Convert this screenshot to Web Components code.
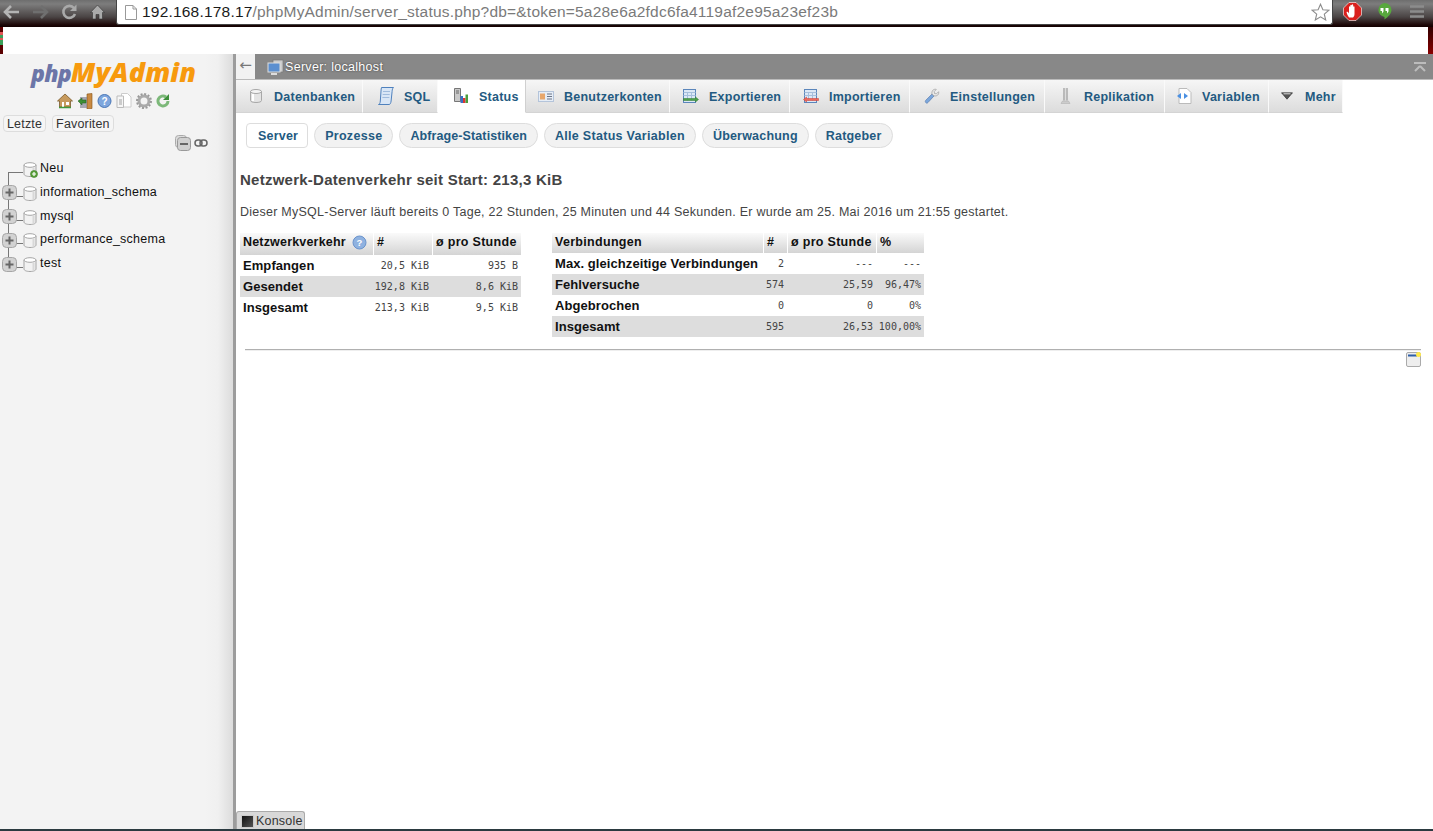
<!DOCTYPE html>
<html lang="de">
<head>
<meta charset="utf-8">
<title>phpMyAdmin</title>
<style>
  html, body { margin: 0; height: 100%; overflow: hidden; background: #fff; }
  body { font-family: "Liberation Sans", Arial, sans-serif; display: flex; flex-direction: column; height: 831px; }
  pma-page { flex: 1; min-height: 0; }
</style>
</head>
<body>
<browser-bar url-host="192.168.178.17" url-path="/phpMyAdmin/server_status.php?db=&amp;token=5a28e6a2fdc6fa4119af2e95a23ef23b"></browser-bar>
<page-strip></page-strip>
<pma-page>
  <pma-nav slot="nav">
    <pma-tree-row kind="new" label="Neu"></pma-tree-row>
    <pma-tree-row label="information_schema"></pma-tree-row>
    <pma-tree-row label="mysql"></pma-tree-row>
    <pma-tree-row label="performance_schema"></pma-tree-row>
    <pma-tree-row kind="last" label="test"></pma-tree-row>
  </pma-nav>
  <pma-main slot="main">
    <pma-tabs slot="tabs">
      <pma-tab icon="db" label="Datenbanken" width="127" pad="12"></pma-tab>
      <pma-tab icon="sql" label="SQL" width="75" pad="15"></pma-tab>
      <pma-tab icon="status" label="Status" width="88" pad="15" active></pma-tab>
      <pma-tab icon="users" label="Benutzerkonten" width="144" pad="12"></pma-tab>
      <pma-tab icon="export" label="Exportieren" width="120" pad="13"></pma-tab>
      <pma-tab icon="import" label="Importieren" width="120" pad="13"></pma-tab>
      <pma-tab icon="tools" label="Einstellungen" width="135" pad="14"></pma-tab>
      <pma-tab icon="repl" label="Replikation" width="120" pad="13"></pma-tab>
      <pma-tab icon="vars" label="Variablen" width="104" pad="11"></pma-tab>
      <pma-tab icon="more" label="Mehr" width="74" pad="10"></pma-tab>
    </pma-tabs>
    <pma-pills slot="pills">
      <pma-pill active>Server</pma-pill>
      <pma-pill style="letter-spacing:.3px">Prozesse</pma-pill>
      <pma-pill style="letter-spacing:.1px">Abfrage-Statistiken</pma-pill>
      <pma-pill style="letter-spacing:.3px">Alle Status Variablen</pma-pill>
      <pma-pill>Überwachung</pma-pill>
      <pma-pill>Ratgeber</pma-pill>
    </pma-pills>
    <pma-status></pma-status>
  </pma-main>
</pma-page>

<script>
const ICONS = {
  db: `<svg width="16" height="16" viewBox="0 0 16 16"><path d="M2.500 3.500v9c0 1.300 2.400 2 5.500 2s5.500-.7 5.500-2v-9z" fill="#e4e4e4" stroke="#a8a8a8"/><ellipse cx="8" cy="3.500" rx="5.500" ry="2" fill="#f4f4f4" stroke="#a8a8a8"/><path d="M5 6v7" stroke="#fff" stroke-width="2"/></svg>`,
  sql: `<svg width="16" height="18" viewBox="0 0 16 18"><path d="M3.500 .5h12c-1 1-1.200 2-1.400 4l-1 9.500c-.2 1.800-.8 3.500-2 3.500H.5c1-.5 1.700-1.200 1.800-3.500l.7-10c.1-1.500.2-2.500.5-3.500z" fill="#d8e6f6" stroke="#4f81bd"/><path d="M5 4.500h7M4.700 7.500h7M4.400 10.500h7" stroke="#9fbbdd"/></svg>`,
  status: `<svg width="16" height="16" viewBox="0 0 16 16"><path d="M1.500 .5h6v13h-6z" fill="#c9c9c9" stroke="#777"/><path d="M3 3h3M3 5h3" stroke="#666"/><path d="M7.500 8h2.500v7H7.500z" fill="#3a6fc4"/><path d="M10 10h2.500v5H10z" fill="#d33"/><path d="M12.500 6.500H15V15h-2.500z" fill="#4a9e3c"/></svg>`,
  users: `<svg width="16" height="11" viewBox="0 0 16 11"><rect x=".5" y=".5" width="15" height="10" fill="#e6edf6" stroke="#b4c4da"/><rect x="2" y="2.500" width="5" height="6" fill="#e8a76c"/><path d="M9 3h5M9 5.500h5M9 8h5" stroke="#6a7488"/></svg>`,
  export: `<svg width="16" height="16" viewBox="0 0 16 16"><rect x=".5" y="1.500" width="12" height="13" fill="#dce8f6" stroke="#5b86bb"/><path d="M.5 4.500h12M.5 7.500h12M4.500 4.500v8M8.500 4.500v8" stroke="#a6bfdc"/><path d="M.5 10.500h12V9l3 2.500-3 2.500v-1.500H.5z" fill="#4ea14b" stroke="#2f7a2e" stroke-width=".5"/></svg>`,
  import: `<svg width="16" height="16" viewBox="0 0 16 16"><rect x="1.500" y="1.500" width="12" height="13" fill="#dce8f6" stroke="#5b86bb"/><path d="M1.500 4.500h12M1.500 7.500h12M5.500 4.500v8M9.500 4.500v8" stroke="#a6bfdc"/><path d="M15.500 10.500h-12V9l-3 2.500 3 2.500v-1.500h12z" fill="#ef6a5e" stroke="#c9372c" stroke-width=".5"/></svg>`,
  tools: `<svg width="18" height="18" viewBox="0 0 18 18"><path d="M2.300 16.700c-1.200-1-1-2.200-.2-3l7-7 2.200 2.200-6.800 7.400c-.8.800-1.400 1.100-2.200.4z" fill="#7ba7dc" stroke="#5d7fb0" stroke-width=".8"/><path d="M9 6.800c-.4-1.800.1-3.300 1-4.300 1-1 2.500-1.300 3.800-.9L11.500 4l.3 2.200 2.200.4 2.400-2.400c.4 1.300 0 2.800-.9 3.700-1 .9-2.400 1.300-4.200.9z" fill="#ececec" stroke="#999" stroke-width=".8"/></svg>`,
  repl: `<svg width="16" height="18" viewBox="0 0 16 18"><path d="M6 1v12.500M9 1v12.500" stroke="#999" stroke-width="1.200"/><path d="M7.500 1v12.500" stroke="#ddd"/><path d="M4.500 14h6l1.500 2.500H3z" fill="#ccc" stroke="#aaa" stroke-width=".5"/></svg>`,
  vars: `<svg width="16" height="16" viewBox="0 0 16 16"><path d="M3 .5h8L15 4.500v11H3z" fill="#fff" stroke="#bbb"/><path d="M5 5 1 8l4 3z" fill="#4a90e2"/><path d="M8 5l4 3-4 3z" fill="#4a90e2"/></svg>`,
  more: `<svg width="12" height="8" viewBox="0 0 12 8"><path d="M.500 .8h11L6 7.200z" fill="#555" stroke="#222" stroke-width=".6"/><path d="M2.500 1.800h7" stroke="#ddd"/></svg>`,
};

const DB_ICON = `<svg width="14" height="15" viewBox="0 0 14 15"><path d="M1 3v9c0 1.400 2.400 2.500 6 2.500s6-1.100 6-2.500V3z" fill="#f2f2f2" stroke="#a5a5a5"/><ellipse cx="7" cy="3" rx="6" ry="2.300" fill="#fff" stroke="#a5a5a5"/><path d="M10.500 5.500v8" stroke="#d8d8d8" stroke-width="2"/></svg>`;

class BrowserBar extends HTMLElement {
  connectedCallback() {
    this.attachShadow({ mode: 'open' }).innerHTML = `
      <style>
        :host { display: flex; height: 27px; align-items: stretch; background: linear-gradient(#6e6e6e 0, #7d7d7d 4px, #4a4444 17px, #1c0606 25px, #120000 27px); }
        .nav { width: 116px; display: flex; box-sizing: border-box; padding: 3px 0 0 3px; gap: 12px; }
        .omni { flex: 0 0 1217px; height: 25px; box-sizing: border-box; background: #fff; border: 1px solid #444; border-top: 0; border-radius: 0 0 3px 3px; display: flex; align-items: center; padding-left: 8px; }
        .url { font: 15.500px "Liberation Sans", Arial, sans-serif; color: #7a7a7a; margin-left: 5px; white-space: nowrap; flex: 1; padding-top: 0; letter-spacing: .2px; }
        .url b { font-weight: 400; color: #1a1a1a; }
        .ext { flex: 1; display: flex; gap: 15px; padding: 2px 0 0 10px; }
      </style>
      <div class="nav">
        <svg width="17" height="18" viewBox="0 0 17 18"><path d="M8 3 2 9l6 6M2 9h14" fill="none" stroke="#b4b4b4" stroke-width="2.600"/></svg>
        <svg width="17" height="18" viewBox="0 0 17 18"><path d="M9 3l6 6-6 6M15 9H1" fill="none" stroke="#6f6f6f" stroke-width="2.600"/></svg>
        <svg width="17" height="18" viewBox="0 0 17 18"><path d="M14 11a6 6 0 1 1-1-6" fill="none" stroke="#a9a9a9" stroke-width="2.600"/><path d="M15.500 1.500v6.500H9z" fill="#a9a9a9"/></svg>
        <svg width="15" height="18" viewBox="0 0 15 18"><path d="M7.500 2 .5 9.500h2V16h3.500v-4.500h3V16H12.500V9.500h2z" fill="#aaa" stroke="#333" stroke-width=".6"/></svg>
      </div>
      <div class="omni">
        <svg width="12" height="15" viewBox="0 0 12 15"><path d="M.5.5h7.500l3.500 3.500v10.500H.5z" fill="#fff" stroke="#999"/><path d="M8 .5V4h3.500" fill="none" stroke="#999"/></svg>
        <span class="url"><b>${this.getAttribute('url-host')}</b>${this.getAttribute('url-path').replace(/&/g, '&amp;')}</span>
        <svg style="margin-right:2px" width="19" height="18" viewBox="0 0 19 18"><path d="M9.500 1.200l2.400 5.500 6 .5-4.600 4 1.400 5.800-5.200-3.100-5.200 3.100 1.400-5.800-4.600-4 6-.5z" fill="#fff" stroke="#8c8c8c" stroke-width="1.100"/></svg>
      </div>
      <div class="ext">
        <svg width="19" height="19" viewBox="0 0 19 19"><path d="M6 .5h7L18.500 6v7L13 18.500H6L.5 13V6z" fill="#d9201c" stroke="#fff" stroke-width=".6"/><path d="M6 15.500c-1.500-2-2-3.500-2.500-5.500 1-.5 1.800.2 2.500 1.500V5c.1-1 1.300-1 1.300 0V3.500c.1-1 1.400-1 1.500 0V3c.1-1 1.400-1 1.400 0v2c.1-1 1.300-1 1.300 0v7c0 1.500-.5 2.500-1.500 3.500z" fill="#fff"/></svg>
        <svg width="15" height="20" viewBox="0 0 15 20"><path d="M7.500 1a7 7 0 0 1 7 7c0 3.500-3.500 7-7 9.500v-2.600A7 7 0 0 1 7.500 1z" fill="#58a83d"/><path d="M3.500 6h3v3.500l-1.500 2V9H3.500zM8.500 6h3v3.500l-1.500 2V9H8.500z" fill="#fff"/></svg>
        <svg style="margin:2px 0 0 3px" width="14" height="16" viewBox="0 0 14 16"><path d="M0 2.500h14M0 7.500h14M0 12.500h14" stroke="#8c8c8c" stroke-width="2.500"/></svg>
      </div>`;
  }
}

class PageStrip extends HTMLElement {
  connectedCallback() {
    this.attachShadow({ mode: 'open' }).innerHTML = `
      <style>
        :host { display: flex; height: 27px; background: #5a0000; }
        .edge { width: 3px; background: linear-gradient(#5a0000 5px, #e25555 5px, #e25555 8px, #3aa05a 8px, #3aa05a 11px, #e25555 11px, #e25555 13px, #3aa05a 13px, #3aa05a 18px, #5a0000 18px); }
        .white { width: 1425px; background: #fff; }
        .right { flex: 1; background: linear-gradient(#300000, #8a0000); }
      </style>
      <div class="edge"></div><div class="white"></div><div class="right"></div>`;
  }
}

class PmaPage extends HTMLElement {
  connectedCallback() {
    this.attachShadow({ mode: 'open' }).innerHTML = `
      <style>
        :host { display: flex; position: relative; background: #fff; box-sizing: border-box; border-bottom: 2px solid #2b3a40; }
      </style>
      <slot name="nav"></slot><slot name="main"></slot><pma-console></pma-console>`;
  }
}

class PmaNav extends HTMLElement {
  connectedCallback() {
    this.attachShadow({ mode: 'open' }).innerHTML = `
      <style>
        :host { display: block; flex: 0 0 233px; box-sizing: border-box; background: linear-gradient(to right, #f3f3f3 205px, #f0f0f0 218px, #dcdcdc 233px); color: #111; font-size: 12.500px; }
        .logo { margin: 4px 0 0 31px; font-family: "Open Sans", "Liberation Sans", sans-serif; font-style: italic; font-weight: 800; line-height: 27px; height: 27px; white-space: nowrap; }
        .logo i { color: #6c76a8; font-size: 23px; letter-spacing: -.8px; }
        .logo b { color: #f79a0e; font-size: 27px; font-weight: 800; letter-spacing: .15px; }
        .links { display: flex; margin: 7px 0 0 57px; gap: 4px; height: 17px; align-items: center; }
        .recent { display: flex; gap: 6px; margin: 6px 0 0 3px; }
        button { font: 12.500px "Liberation Sans", Arial, sans-serif; color: #333; height: 17px; padding: 0 3px; background: #f5f5f5; border: 1px solid #ddd; border-radius: 4px; letter-spacing: .17px; }
        .tools { display: flex; gap: 3px; margin: 2px 0 0 175px; align-items: center; height: 17px; }
        .tree { margin-top: 9px; display: flex; flex-direction: column; }
      </style>
      <div class="logo"><i>php</i><b>MyAdmin</b></div>
      <div class="links">
        <svg width="16" height="16" viewBox="0 0 16 16"><path d="M8 1 .5 8h2v6h11V8h2z" fill="#c79a5c" stroke="#7a5a2c" stroke-width=".8"/><path d="M5 14V9h2v5zM9 9h3v3H9z" fill="#fff"/><path d="M2 14.500h12" stroke="#3f9a3c" stroke-width="1.500"/></svg>
        <svg width="16" height="16" viewBox="0 0 16 16"><path d="M10 1l5-.5v15l-5 .5z" fill="#c98a42" stroke="#855015" stroke-width=".6"/><path d="M3 4h7v11H3z" fill="#778" opacity=".6"/><path d="M1 8l4-3v2h4v3H5v2z" fill="#3d8f35" stroke="#235d1e" stroke-width=".5"/></svg>
        <svg width="15" height="16" viewBox="0 0 15 16"><circle cx="7.500" cy="8" r="6.500" fill="#7ea6dd" stroke="#4a76b6"/><text x="7.500" y="11.500" text-anchor="middle" font-size="10" font-weight="700" font-family="Liberation Sans" fill="#fff">?</text></svg>
        <svg width="16" height="16" viewBox="0 0 16 16"><path d="M5.500 .5h6L15 4v10H5.500z" fill="#fff" stroke="#ccc"/><path d="M1 3h6.500v11.500H1z" fill="#f6f6f6" stroke="#bbb"/><path d="M3 6h3v6H3z" fill="#ccc"/></svg>
        <svg width="16" height="16" viewBox="0 0 16 16"><circle cx="8" cy="8" r="5" fill="none" stroke="#aaa" stroke-width="3"/><circle cx="8" cy="8" r="7" fill="none" stroke="#999" stroke-width="2" stroke-dasharray="2 1.660"/></svg>
        <svg width="14" height="16" viewBox="0 0 14 16"><path d="M12 8a5 5 0 1 1-2-4" fill="none" stroke="#7cb879" stroke-width="3"/><path d="M13 1v6H7z" fill="#3d8f3a"/></svg>
      </div>
      <div class="recent"><button>Letzte</button><button>Favoriten</button></div>
      <div class="tools">
        <svg width="16" height="16" viewBox="0 0 16 16"><rect x=".5" y=".5" width="11" height="12" rx="3" fill="#ddd" stroke="#aaa"/><rect x="2.500" y="2.500" width="13" height="13" rx="3" fill="#d0d0d0" stroke="#999"/><path d="M5 9h8" stroke="#666" stroke-width="2"/></svg>
        <svg width="14" height="8" viewBox="0 0 14 8"><rect x="1" y="1" width="7" height="6" rx="3" fill="none" stroke="#666" stroke-width="1.500"/><rect x="6" y="1" width="7" height="6" rx="3" fill="none" stroke="#666" stroke-width="1.500"/></svg>
      </div>
      <div class="tree"><slot></slot></div>`;
  }
}

class PmaTreeRow extends HTMLElement {
  connectedCallback() {
    const kind = this.getAttribute('kind');
    const isNew = kind === 'new';
    const last = kind === 'last';
    const glyph = isNew
      ? `<span class="stub"></span>`
      : `<svg class="exp" width="15" height="15" viewBox="0 0 15 15"><rect x=".5" y=".5" width="14" height="14" rx="4" fill="#d2d2d2" stroke="#a6a6a6"/><path d="M3.500 7.500h8M7.500 3.500v8" stroke="#666" stroke-width="2"/></svg><span class="stub short"></span>`;
    this.attachShadow({ mode: 'open' }).innerHTML = `
      <style>
        :host { display: flex; position: relative; height: 23.750px; align-items: flex-start; }
        .gutter { width: 23px; height: 16px; margin-top: 1px; display: flex; align-items: center; position: relative; padding-left: 2px; box-sizing: border-box; }
        .stub { position: absolute; left: 8px; right: 0; top: 11px; height: 1px; background: #777; }
        .stub.short { left: 16px; }
        .exp { position: relative; z-index: 1; }
        .line { position: absolute; left: 8px; width: 1px; background: #777; top: ${isNew ? '12px' : '0'}; height: ${last ? '8px' : isNew ? '12px' : '24px'}; }
        .icon { position: relative; width: 16px; height: 16px; margin-top: 2px; }
        .plus { position: absolute; left: 7px; top: 8px; }
        .label { margin-left: 1px; line-height: 16px; font-size: 12.500px; color: #111; letter-spacing: .25px; white-space: nowrap; }
      </style>
      <span class="line"></span>
      <div class="gutter">${glyph}</div>
      <div class="icon">${DB_ICON}${isNew ? `<svg class="plus" width="8" height="8" viewBox="0 0 8 8"><circle cx="4" cy="4" r="3.500" fill="#5aa03c" stroke="#3d7d24" stroke-width=".6"/><path d="M2 4h4M4 2v4" stroke="#fff" stroke-width="1.200"/></svg>` : ''}</div>
      <div class="label">${this.getAttribute('label')}</div>`;
  }
}

class PmaMain extends HTMLElement {
  connectedCallback() {
    this.attachShadow({ mode: 'open' }).innerHTML = `
      <style>
        :host { display: block; flex: 1; min-width: 0; box-sizing: border-box; border-left: 3px solid #9c9c9c; }
        .server { display: flex; align-items: center; height: 26px; background: #888; border-bottom: 1px solid #bbb; box-sizing: border-box; }
        .back { width: 19px; height: 25px; background: #f2f2f2; color: #777; font: 15px "DejaVu Sans", sans-serif; text-align: center; line-height: 23px; }
        .srv { margin-left: 12px; display: flex; gap: 1px; align-items: center; color: #fff; font-size: 12.500px; flex: 1; text-shadow: 0 0 2px #333; letter-spacing: .3px; }
        .up { margin-right: 7px; }
      </style>
      <div class="server">
        <div class="back">←</div>
        <div class="srv">
          <svg width="17" height="16" viewBox="0 0 17 16"><rect x="6" y="1" width="10" height="12" fill="#ccc" stroke="#777" stroke-width=".7"/><rect x="1" y="4" width="12" height="9" fill="#5b8fd0" stroke="#ddd"/><path d="M4 15h6" stroke="#ddd" stroke-width="2"/></svg>
          <span>Server: localhost</span>
        </div>
        <svg class="up" width="12" height="10" viewBox="0 0 12 10"><path d="M0 1h12" stroke="#bcbcbc" stroke-width="2"/><path d="M6 4 1 9M6 4l5 5" stroke="#bcbcbc" stroke-width="2" fill="none"/></svg>
      </div>
      <slot name="tabs"></slot>
      <slot name="pills"></slot>
      <slot></slot>`;
  }
}

class PmaTabs extends HTMLElement {
  connectedCallback() {
    this.attachShadow({ mode: 'open' }).innerHTML = `
      <style>
        :host { display: flex; height: 33px; padding-left: 0; margin-bottom: 10px; }
      </style>
      <slot></slot>`;
  }
}

class PmaTab extends HTMLElement {
  connectedCallback() {
    const active = this.hasAttribute('active');
    this.attachShadow({ mode: 'open' }).innerHTML = `
      <style>
        :host { display: flex; flex: 0 0 ${this.getAttribute('width')}px; box-sizing: border-box; align-items: center; padding-left: ${this.getAttribute('pad')}px; background: ${active ? '#fff' : 'linear-gradient(#f6f6f6, #dcdcdc)'}; border-right: 1px solid ${active ? '#d0d0d0' : '#fafafa'}; border-bottom: 1px solid ${active ? '#fff' : '#d4d4d4'}; }
        .ic { width: 16px; height: 18px; display: flex; align-items: center; justify-content: center; flex: none; margin-right: 10px; }
        .t { font: 700 12.500px "Liberation Sans", Arial, sans-serif; color: #235a81; letter-spacing: .25px; white-space: nowrap; padding-top: 1px; }
      </style>
      <span class="ic">${ICONS[this.getAttribute('icon')]}</span>
      <span class="t">${this.getAttribute('label')}</span>`;
  }
}

class PmaPills extends HTMLElement {
  connectedCallback() {
    this.attachShadow({ mode: 'open' }).innerHTML = `
      <style>
        :host { display: flex; gap: 6px; padding-left: 10px; height: 25px; }
      </style>
      <slot></slot>`;
  }
}

class PmaPill extends HTMLElement {
  connectedCallback() {
    const active = this.hasAttribute('active');
    this.attachShadow({ mode: 'open' }).innerHTML = `
      <style>
        :host { display: flex; align-items: center; box-sizing: border-box; height: 25px; padding: 0 ${active ? 9 : 10}px 0 ${active ? 11 : 10}px; border: 1px solid #ddd; border-radius: ${active ? 4 : 13}px; background: ${active ? '#fff' : '#f2f2f2'}; font: 700 12.500px "Liberation Sans", Arial, sans-serif; color: #235a81; letter-spacing: .2px; white-space: nowrap; }
      </style>
      <slot></slot>`;
  }
}

class PmaTable extends HTMLElement {
  connectedCallback() {
    const cols = this.getAttribute('cols').split(',').map(n => `${n}px`).join(' ');
    const rowH = this.getAttribute('row-h');
    const headH = Number(this.getAttribute('head-h'));
    const data = JSON.parse(this.getAttribute('data'));
    const head = JSON.parse(this.getAttribute('head'));
    const q = `<svg width="15" height="15" viewBox="0 0 15 15"><circle cx="7.500" cy="7.500" r="6.500" fill="#8fb2e0" stroke="#6a93cc"/><text x="7.500" y="11" text-anchor="middle" font-size="9.500" font-weight="700" font-family="Liberation Sans" fill="#fff">?</text></svg>`;
    this.attachShadow({ mode: 'open' }).innerHTML = `
      <style>
        :host { display: block; }
        .row { display: grid; grid-template-columns: ${cols}; height: ${rowH}px; align-items: center; }
        .head { height: ${headH}px; background: linear-gradient(#fafafa, #d4d4d4); column-gap: 0; }
        .head span { font: 700 12.500px "Liberation Sans", Arial, sans-serif; color: #111; letter-spacing: .3px; padding: 0 3px ${headH - 18}px; white-space: nowrap; height: 100%; display: flex; align-items: center; justify-content: space-between; border-right: 1px solid #fff; box-sizing: border-box; }
        .head span:last-child { border-right: 0; }
        .head span.hint { padding-right: 6px; letter-spacing: .18px; }
        .alt { background: #ddd; }
        .name { font: 700 13px "Liberation Sans", Arial, sans-serif; color: #111; padding-left: 3px; white-space: nowrap; letter-spacing: .07px; }
        .num { font: 10px "DejaVu Sans Mono", monospace; color: #444; text-align: right; padding-right: 3px; white-space: nowrap; }
        .num:not(:last-child) { padding-right: 4px; }
      </style>
      <div class="row head">${head.map((h, i) => {
        const hint = i === 0 && this.hasAttribute('hint');
        return `<span class="${hint ? 'hint' : ''}">${h}${hint ? q : ''}</span>`;
      }).join('')}</div>
      ${data.map((r, i) => `<div class="row ${i % 2 ? 'alt' : ''}"><div class="name">${r[0]}</div>${r.slice(1).map(c => `<div class="num">${c}</div>`).join('')}</div>`).join('')}`;
  }
}

class PmaStatus extends HTMLElement {
  connectedCallback() {
    this.attachShadow({ mode: 'open' }).innerHTML = `
      <style>
        :host { display: block; padding: 0 12px 0 4px; color: #444; }
        h2 { font: 700 15px/18px "Liberation Sans", Arial, sans-serif; margin: 23px 0 0; letter-spacing: .25px; }
        p { font: 12.500px/16px "Liberation Sans", Arial, sans-serif; margin: 15px 0 0; letter-spacing: .25px; }
        .tables { display: flex; gap: 31px; margin-top: 13px; height: 104px; }
        hr { border: 0; border-top: 1px solid #b0b0b0; border-bottom: 1px solid #eee; margin: 12px 0 0 5px; }
        .note { display: flex; justify-content: flex-end; margin-top: 1px; }
      </style>
      <h2>Netzwerk-Datenverkehr seit Start: 213,3 KiB</h2>
      <p>Dieser MySQL-Server läuft bereits 0 Tage, 22 Stunden, 25 Minuten und 44 Sekunden. Er wurde am 25. Mai 2016 um 21:55 gestartet.</p>
      <div class="tables">
        <pma-table hint cols="134,59,88" row-h="21" head-h="22"
          head='["Netzwerkverkehr","#","ø pro Stunde"]'
          data='[["Empfangen","20,5 KiB","935 B"],["Gesendet","192,8 KiB","8,6 KiB"],["Insgesamt","213,3 KiB","9,5 KiB"]]'></pma-table>
        <pma-table cols="212,24,89,47" row-h="21" head-h="20"
          head='["Verbindungen","#","ø pro Stunde","%"]'
          data='[["Max. gleichzeitige Verbindungen","2","---","---"],["Fehlversuche","574","25,59","96,47%"],["Abgebrochen","0","0","0%"],["Insgesamt","595","26,53","100,00%"]]'></pma-table>
      </div>
      <hr>
      <div class="note">
        <svg width="15" height="15" viewBox="0 0 15 15"><rect x=".5" y=".5" width="14" height="14" rx="1.500" fill="#eee" stroke="#aaa"/><path d="M2 3.500h9" stroke="#2f5fa8" stroke-width="2"/><circle cx="12.500" cy="2.500" r="2.500" fill="#ffe94a"/></svg>
      </div>`;
  }
}

class PmaConsole extends HTMLElement {
  connectedCallback() {
    this.attachShadow({ mode: 'open' }).innerHTML = `
      <style>
        :host { position: absolute; left: 236px; bottom: 0; height: 18px; width: 69px; box-sizing: border-box; display: flex; align-items: center; gap: 2px; padding-left: 4px; background: #d8d8d8; border: 1px solid #aaa; border-bottom: 0; border-radius: 3px 3px 0 0; font: 12.500px "Liberation Sans", Arial, sans-serif; color: #333; letter-spacing: .2px; }
        i { width: 13px; height: 13px; flex: none; margin-top: 2px; background: linear-gradient(135deg, #111, #555); border: 1px solid #ccc; box-sizing: border-box; }
      </style>
      <i></i><span>Konsole</span>`;
  }
}

customElements.define('browser-bar', BrowserBar);
customElements.define('page-strip', PageStrip);
customElements.define('pma-page', PmaPage);
customElements.define('pma-nav', PmaNav);
customElements.define('pma-tree-row', PmaTreeRow);
customElements.define('pma-main', PmaMain);
customElements.define('pma-tabs', PmaTabs);
customElements.define('pma-tab', PmaTab);
customElements.define('pma-pills', PmaPills);
customElements.define('pma-pill', PmaPill);
customElements.define('pma-table', PmaTable);
customElements.define('pma-status', PmaStatus);
customElements.define('pma-console', PmaConsole);
</script>
</body>
</html>
